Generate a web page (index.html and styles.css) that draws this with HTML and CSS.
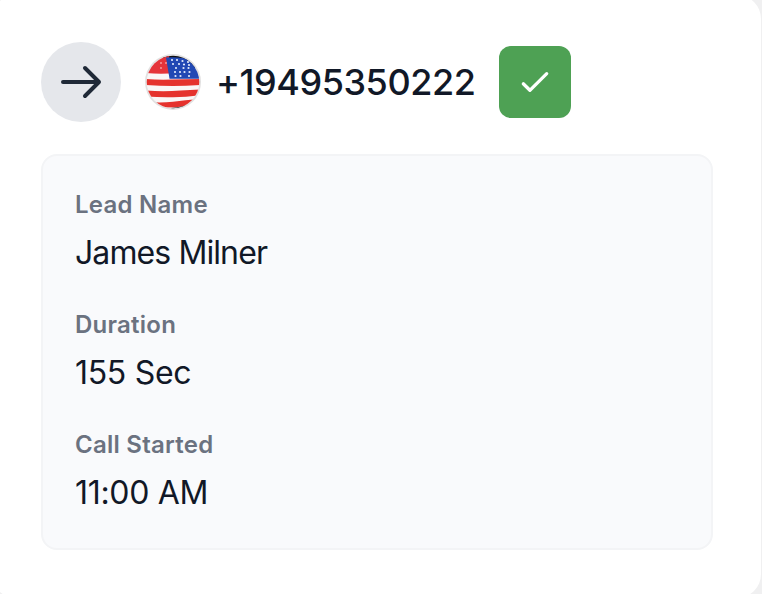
FILE: index.html
```html
<!DOCTYPE html>
<html lang="en">
<head>
    <meta charset="UTF-8">
    <meta name="viewport" content="width=device-width, initial-scale=1.0">
    <title>Call Details</title>
    <link rel="stylesheet" href="styles.css">
</head>
<body>

    <div class="call-card">
        <!-- Caller -->
        <div class="call-header">
            <div class="direction">
                <svg width="48" height="48" viewBox="0 0 48 48" fill="none" stroke="#1f2937" stroke-width="4" stroke-linecap="round" stroke-linejoin="round">
                    <path d="M6 24h36M28 10l14 14-14 14"/>
                </svg>
            </div>
            <svg class="flag" width="56" height="56" viewBox="0 0 56 56">
                <defs>
                    <clipPath id="flag-clip">
                        <circle cx="28" cy="28" r="26.3"/>
                    </clipPath>
                </defs>
                <circle cx="28" cy="28" r="28" fill="#e2e1e1"/>
                <g clip-path="url(#flag-clip)">
                    <rect width="56" height="56" fill="#faf6f6"/>
                    <path d="M18 0h38v14H18z" fill="#111"/>
                    <path d="M0 0h24v19.500Q12 20 0 19z" fill="#e5343a"/>
                    <path d="M0 25q14 1 27 .5t29-.5v6q-15 1-28 1T0 31z" fill="#e5322d"/>
                    <path d="M0 36.500q14 1 27 .5t29-1.500v5.500q-15 2-28 2.300T0 42.500z" fill="#e5322d"/>
                    <path d="M4 48q12 1 24-.3T54 45v5q-12 3-24 3.300T6 53z" fill="#e5322d"/>
                    <path d="M16 54q12 1 26-3l-8 7H18z" fill="#111"/>
                    <path d="M21 3.500q14-1.500 26 3l9 3v15.200H24.500z" fill="#2148b4"/>
                    <g fill="#e3eafb">
                        <circle cx="27" cy="6" r="1.100"/><circle cx="32" cy="6" r="1.100"/><circle cx="37.500" cy="7" r="1.100"/><circle cx="43" cy="8" r="1.100"/>
                        <circle cx="28" cy="10" r="1.100"/><circle cx="34" cy="10" r="1.100"/><circle cx="39" cy="10.500" r="1.100"/><circle cx="44" cy="11" r="1.100"/>
                        <circle cx="31" cy="14" r="1.100"/><circle cx="38.500" cy="14" r="1.100"/><circle cx="43.500" cy="14" r="1.100"/>
                        <circle cx="30" cy="18" r="1.100"/><circle cx="35" cy="18" r="1.100"/><circle cx="39.500" cy="18" r="1.100"/><circle cx="44.500" cy="18" r="1.100"/>
                        <circle cx="30.500" cy="22" r="1.100"/><circle cx="35.500" cy="22" r="1.100"/><circle cx="44" cy="22" r="1.100"/>
                    </g>
                    <g fill="#f59a9c">
                        <circle cx="16" cy="9" r="1"/><circle cx="21" cy="9" r="1"/><circle cx="16" cy="14" r="1"/>
                    </g>
                </g>
            </svg>
            <span class="phone">+19495350222</span>
            <button class="status" type="button" aria-label="Answered">
                <svg width="32" height="32" viewBox="0 0 32 32" fill="none" stroke="#fff" stroke-width="3.3" stroke-linecap="round" stroke-linejoin="round">
                    <path d="M4.300 17.800l6.600 6.500L27.700 7.700"/>
                </svg>
            </button>
        </div>

        <!-- Call details -->
        <dl class="call-details">
            <dt>Lead Name</dt>
            <dd class="lead-name">James Milner</dd>
            <dt>Duration</dt>
            <dd>155 Sec</dd>
            <dt>Call Started</dt>
            <dd>11:00 AM</dd>
        </dl>
    </div>

</body>
</html>
```

FILE: styles.css
```css
/* General Styles */
* {
    box-sizing: border-box;
}

body {
    font-family: Inter, sans-serif;
    margin: 0;
    height: 594px;
    overflow: hidden;
    background-color: #f0f0f1;
}

.call-card {
    width: 769px;
    height: 603px;
    margin: -5px 0 0 -8px;
    padding: 47px 48px 0 49px;
    background-color: #fff;
    border-radius: 24px;
}

/* Caller row */
.call-header {
    display: flex;
    align-items: center;
    height: 80px;
}

.direction {
    display: flex;
    justify-content: center;
    align-items: center;
    width: 80px;
    height: 80px;
    margin-right: 24px;
    border-radius: 50%;
    background-color: #e5e7eb;
}

.flag {
    margin-right: 15px;
}

.phone {
    width: 259px;
    margin-right: 24px;
    font-size: 36px;
    font-weight: 500;
    line-height: 48px;
    letter-spacing: -0.45px;
    color: #111827;
    white-space: nowrap;
}

.status {
    display: flex;
    justify-content: center;
    align-items: center;
    width: 72px;
    height: 72px;
    padding: 0;
    border: none;
    border-radius: 12px;
    background-color: #4ea154;
}

/* Details box */
.call-details {
    width: 672px;
    height: 396px;
    margin: 32px 0 0;
    padding: 33px 32px 31px;
    border: 2px solid #f3f4f6;
    border-radius: 16px;
    background-color: #f9fafc;
}

.call-details dt {
    font-size: 24px;
    font-weight: 600;
    line-height: 32px;
    letter-spacing: 0.25px;
    color: #6b7280;
}

.call-details dd {
    margin: 8px 0 32px;
    font-size: 32px;
    line-height: 48px;
    letter-spacing: -0.3px;
    color: #111827;
}

.call-details .lead-name {
    letter-spacing: -0.9px;
}
```
